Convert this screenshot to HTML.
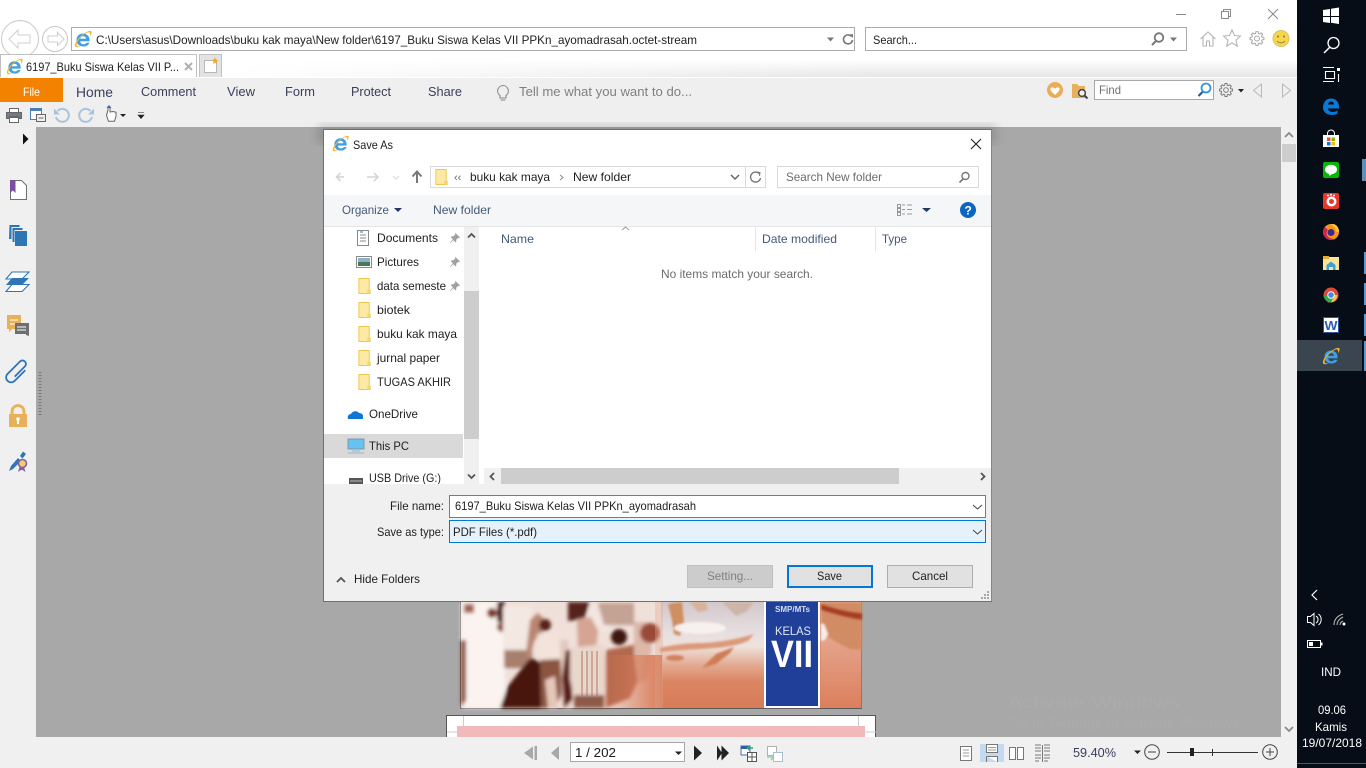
<!DOCTYPE html>
<html><head><meta charset="utf-8"><title>Save As</title>
<style>
html,body{margin:0;padding:0;width:1366px;height:768px;overflow:hidden;background:#fff}
svg{display:block;position:absolute;left:0;top:0}
text{font-family:"Liberation Sans",sans-serif;font-size:12px;fill:#222;white-space:pre}
.r{fill:#37415c;font-size:12.5px}
.d{fill:#1e1e1e}
.h{fill:#44597a}
.w{fill:#fff}
</style></head><body>
<svg width="1366" height="768" viewBox="0 0 1366 768" xmlns="http://www.w3.org/2000/svg">
<defs>
<linearGradient id="sh" x1="0" y1="0" x2="0" y2="1"><stop offset="0" stop-color="#fff"/><stop offset="1" stop-color="#e4e4e4"/></linearGradient>
<linearGradient id="shx" x1="0" y1="0" x2="1" y2="0"><stop offset="0" stop-color="#fff"/><stop offset="1" stop-color="#fff" stop-opacity="0"/></linearGradient>
<linearGradient id="fade" x1="0" y1="0" x2="0" y2="1"><stop offset="0" stop-color="#d3c8cc"/><stop offset=".3" stop-color="#e6dfe0"/><stop offset=".42" stop-color="#efe2dc"/><stop offset=".6" stop-color="#e3a88f"/><stop offset=".75" stop-color="#da8663"/><stop offset="1" stop-color="#d87b58"/></linearGradient>
<linearGradient id="pf" x1="0" y1="0" x2="1" y2="0"><stop offset="0" stop-color="#d77a58" stop-opacity="0"/><stop offset="1" stop-color="#d87b58"/></linearGradient>
<linearGradient id="rg" x1="0" y1="0" x2="0" y2="1"><stop offset="0" stop-color="#e9b8a6"/><stop offset="1" stop-color="#dc7f5c"/></linearGradient>
<filter id="b1"><feGaussianBlur stdDeviation="1"/></filter>
<filter id="b2"><feGaussianBlur stdDeviation="1.800"/></filter>
<filter id="bs"><feGaussianBlur stdDeviation="5"/></filter>
<symbol id="ie" viewBox="0 0 18 18">
<path fill-rule="evenodd" d="M2.500 10C2.500 6 5.300 3.500 9 3.500c4 0 6.500 2.800 6.500 6.500v1.200H6.200c.2 1.900 1.400 3 3.300 3 1.300 0 2.300-.5 3-1.500h3c-1 2.500-3.300 3.800-6 3.800C5.300 16.500 2.500 14 2.500 10zM6.300 8.800h5.800c-.2-1.600-1.300-2.600-2.900-2.600-1.600 0-2.700 1-2.900 2.600z" fill="#3fa0e6"/>
<path d="M1.200 16.500C-.2 14.200 3.500 8.500 8 5c4-3.100 8-4.900 9.300-3.800 1 1-.3 3.700-1.300 5 .1-1.400.3-3-.5-3.600-1.200-.7-4 .7-6.800 2.900C5 8.700 2 13 2.700 15.500c.7 1.200 2.700 1.100 4.300.2-1.900 1.500-4.700 2.100-5.800.8z" fill="#f2b632"/>
</symbol>
<symbol id="fo" viewBox="0 0 13 17">
<path d="M.5.500h11v12.500h1v3.500H.5z" fill="#fde9a4" stroke="#edc650"/><path d="M9.500 12.500h2.500v4h-2.500z" fill="#f5d56f"/>
</symbol>
<symbol id="pin" viewBox="0 0 12 12">
<path d="M6.500 1l4.500 4.500-1 .6-1-.2-1.800 1.900.1 1.800-.8.800-2.300-2.300L1.500 11 1 10.500l2.900-3.200L1.700 5.100l.8-.8 1.800.1 1.900-1.800-.2-1z" fill="#a0a0a0"/>
</symbol>
<symbol id="gear" viewBox="-8 -8 16 16">
<path d="M-1.430-5-1.090-6.910 1.090-6.910 1.430-5 2.520-4.550 4.110-5.660 5.660-4.110 4.550-2.520 5-1.430 6.910-1.090 6.910 1.090 5 1.430 4.550 2.520 5.660 4.110 4.110 5.660 2.520 4.550 1.430 5 1.090 6.910-1.090 6.910-1.430 5-2.520 4.550-4.110 5.660-5.660 4.110-4.550 2.520-5 1.430-6.910 1.090-6.910-1.090-5-1.430-4.550-2.520-5.660-4.110-4.110-5.660-2.520-4.550zM2.500 0a2.500 2.500 0 1 0-5 0 2.500 2.500 0 1 0 5 0z" fill="none" stroke="#777" stroke-width="1"/>
</symbol>
</defs>

<!-- browser chrome -->
<rect width="1366" height="768" fill="#fff"/>
<rect x="230" y="60" width="1067" height="18" fill="url(#sh)"/>
<rect x="230" y="60" width="650" height="18" fill="url(#shx)"/>
<line x1="1176" y1="14.500" x2="1186" y2="14.500" stroke="#8a8a8a"/>
<path d="M1221.500 11.500h7v7h-7zM1223.500 11.500v-2h7v7h-2" fill="none" stroke="#8a8a8a"/>
<path d="M1268 9l10 10M1278 9l-10 10" stroke="#8a8a8a" fill="none"/>
<circle cx="20" cy="39" r="18.500" fill="#fff" stroke="#c8c8c8"/>
<path d="M9 39l9-9v5h12v8H18v5z" fill="#fff" stroke="#cfcfcf" stroke-width="1"/>
<circle cx="55" cy="39" r="12.500" fill="#fff" stroke="#c8c8c8"/>
<path d="M64 39l-6.500-6.500V36H48v6h9.500v3.500z" fill="#fff" stroke="#cfcfcf" stroke-width="1"/>
<rect x="71.500" y="27.500" width="783" height="23" fill="#fff" stroke="#ababab"/>
<use href="#ie" x="74" y="30" width="18" height="18"/>
<text x="96" y="44" textLength="601" lengthAdjust="spacingAndGlyphs">C:\Users\asus\Downloads\buku kak maya\New folder\6197_Buku Siswa Kelas VII PPKn_ayomadrasah.octet-stream</text>
<path d="M827 37.500h7l-3.500 4z" fill="#777"/>
<path d="M851.500 36.500a4.500 4.500 0 1 0 1 3.500" fill="none" stroke="#777" stroke-width="1.600"/><path d="M849.500 34.500l3.500-.5-.2 4z" fill="#777"/>
<rect x="865.500" y="27.500" width="321" height="23" fill="#fff" stroke="#ababab"/>
<text x="873" y="44" textLength="44" lengthAdjust="spacingAndGlyphs">Search...</text>
<circle cx="1159" cy="37.500" r="4.300" fill="none" stroke="#777" stroke-width="1.800"/><path d="M1156 41l-4 4" stroke="#777" stroke-width="2"/>
<path d="M1170 37.500h7l-3.500 4z" fill="#777"/>
<path d="M1200.500 39l7.500-7 7.500 7M1203 37v9h3.500v-5h3v5h3.500v-9" fill="#fff" stroke="#b5b5b5" stroke-width="1.100"/>
<path d="M1232 30l2.500 5.500 6 .6-4.500 4 1.300 6-5.300-3.200-5.300 3.200 1.300-6-4.500-4 6-.6z" fill="#fff" stroke="#b5b5b5" stroke-width="1.100"/>
<use href="#gear" x="1249" y="30.500" width="16" height="16" opacity=".65"/>
<circle cx="1281" cy="38.500" r="8" fill="#f5d64d" stroke="#d8c46a"/><circle cx="1278" cy="36.500" r="1" fill="#8a7a30"/><circle cx="1284" cy="36.500" r="1" fill="#8a7a30"/><path d="M1277 41c2 2.500 6 2.500 8 0" fill="none" stroke="#8a7a30"/>

<!-- tabs -->
<path d="M0.500 78V54.500h196V78" fill="#fff" stroke="#c0c0c0"/>
<use href="#ie" x="6" y="58" width="17" height="17"/>
<text x="26" y="71" textLength="153" lengthAdjust="spacingAndGlyphs">6197_Buku Siswa Kelas VII P...</text>
<path d="M185 63l7 7M192 63l-7 7" stroke="#b0b0b0" stroke-width="2"/>
<rect x="199.500" y="54.500" width="22" height="23" fill="#e3e3e3" stroke="#c0c0c0"/>
<path d="M204.500 60.500h12v12h-12z" fill="#fff" stroke="#b8b8b8"/>
<path d="M215 57l1 2.500 2.500.5-2 1.500.5 2.500-2-1.500-2 1.500.5-2.500-2-1.500 2.500-.5z" fill="#f0a830"/>

<!-- ribbon -->
<rect x="0" y="77" width="1297" height="1" fill="#fff"/>
<rect x="0" y="78" width="1297" height="49" fill="#efefef"/>
<rect x="0" y="78" width="63" height="24" fill="#f28200"/>
<text x="23" y="96" class="w" textLength="17" lengthAdjust="spacingAndGlyphs">File</text>
<text x="76" y="97" class="r" style="font-size:14px" textLength="37" lengthAdjust="spacingAndGlyphs">Home</text>
<text x="141" y="96" class="r" textLength="55" lengthAdjust="spacingAndGlyphs">Comment</text>
<text x="227" y="96" class="r" textLength="28" lengthAdjust="spacingAndGlyphs">View</text>
<text x="285" y="96" class="r" textLength="30" lengthAdjust="spacingAndGlyphs">Form</text>
<text x="351" y="96" class="r" textLength="40" lengthAdjust="spacingAndGlyphs">Protect</text>
<text x="428" y="96" class="r" textLength="34" lengthAdjust="spacingAndGlyphs">Share</text>
<path d="M503 85.500a5.500 5.500 0 0 0-3 10v2.500h6v-2.500a5.500 5.500 0 0 0-3-10zM500.500 100h5" fill="none" stroke="#8a8a8a" stroke-width="1.100"/>
<text x="519" y="96" style="fill:#808080;font-size:12.500px" textLength="173" lengthAdjust="spacingAndGlyphs">Tell me what you want to do...</text>

<circle cx="1055" cy="90" r="8" fill="#e9ad5a"/><path d="M1055 95l-4-4c-1.500-2 0-4 1.800-3.600.9.200 1.600.8 2.200 1.600.6-.8 1.300-1.400 2.200-1.600 1.800-.4 3.300 1.600 1.800 3.600z" fill="#fff"/>
<path d="M1072 84h5l2 2h6v12h-13z" fill="#e8b05c"/><circle cx="1082" cy="93" r="3.400" fill="#f0f0f0" stroke="#444" stroke-width="1.500"/><path d="M1084.500 95.500l3 3" stroke="#444" stroke-width="2"/>
<rect x="1094.500" y="80.500" width="119" height="19" fill="#fff" stroke="#a8a8a8"/>
<text x="1099" y="94" style="fill:#707070" textLength="22" lengthAdjust="spacingAndGlyphs">Find</text>
<circle cx="1206" cy="88" r="4.500" fill="#fff" stroke="#3a93d6" stroke-width="1.800"/><path d="M1202.500 92l-4 4" stroke="#1f5d9c" stroke-width="2.200"/>
<use href="#gear" x="1218.500" y="82.500" width="15" height="15"/>
<path d="M1238 89h6l-3 3.500z" fill="#222"/>
<path d="M1261.500 84l-8 6.500 8 6.500z" fill="none" stroke="#b8b8b8"/>
<path d="M1282.500 84l8 6.500-8 6.500z" fill="none" stroke="#b8b8b8"/>

<!-- quick access -->
<rect x="9.500" y="108.500" width="9" height="4" fill="#fff" stroke="#666"/><path d="M6.500 112.500h15v6h-3v-2h-9v2h-3z" fill="#707c8a" stroke="#666"/><rect x="9.500" y="117.500" width="9" height="5" fill="#fff" stroke="#666"/>
<rect x="30.500" y="108.500" width="11" height="11" fill="#fff" stroke="#4a7fb5"/><rect x="30" y="108" width="12" height="3" fill="#4a7fb5"/><rect x="36.500" y="114.500" width="9" height="7" fill="#f0f0f0" stroke="#666"/><path d="M38.500 118h5" stroke="#666"/>
<path d="M56 117a6.500 6.500 0 1 0 1.500-6" fill="none" stroke="#aac3dd" stroke-width="2"/><path d="M54 108.500v6h6z" fill="#aac3dd"/>
<path d="M92 117a6.500 6.500 0 1 1-1.500-6" fill="none" stroke="#aac3dd" stroke-width="2"/><path d="M94 108.500v6h-6z" fill="#aac3dd"/>
<path d="M108 110v-3l1-1 1 1v5l3-.5 3 .8v4l-1.500 5h-6l-2-6z" fill="#fff" stroke="#666"/><path d="M109 105l-2.500 3h5z" fill="#2f70b0"/><path d="M120 114h6l-3 3z" fill="#222"/>
<path d="M138 112.500h6M138 115h6l-3 3.500z" fill="#222" stroke="#222" stroke-width=".6"/>

<!-- left panel and doc area -->
<rect x="0" y="127" width="36" height="610" fill="#f0f0f0"/>
<rect x="36" y="127" width="1245" height="610" fill="#a8a8a8"/>
<text x="1008" y="708" style="fill:#ababab;font-size:17px" textLength="172" lengthAdjust="spacingAndGlyphs">Activate Windows</text>
<text x="1008" y="727" style="fill:#ababab;font-size:13.500px" textLength="236" lengthAdjust="spacingAndGlyphs">Go to Settings to activate Windows.</text>
<rect x="1281" y="127" width="16" height="610" fill="#f0f0f0"/>
<path d="M1285 137l4-4 4 4" fill="none" stroke="#8a8a8a" stroke-width="1.800"/>
<rect x="1282" y="144" width="14" height="18" fill="#cdcdcd"/>
<path d="M1285 727l4 4 4-4" fill="none" stroke="#8a8a8a" stroke-width="1.800"/>

<path d="M23 133.500l5.500 5.500-5.500 5.500z" fill="#111"/>
<path d="M10.500 180.500h11l5 5v14h-16z" fill="#fff" stroke="#707070"/><path d="M10 180h5.500v13l-2.700-2.500L10 193z" fill="#7b4f9e"/>
<path d="M9.500 225h10v2H11.500v12H9z" fill="#2e75b6"/><path d="M12.500 228h10v2h-8v12h-2z" fill="#2e75b6"/><rect x="15" y="231" width="12" height="15" fill="#2e75b6"/>
<path d="M12 272h17l-7 7H6z" fill="#fff" stroke="#2e75b6" stroke-width="1.100"/><path d="M12 278h17l-7 7H6z" fill="#2e75b6"/><path d="M12 285h17l-7 7H6z" fill="#fff" stroke="#2e75b6" stroke-width="1.100" transform="translate(0 -.500)"/>
<path d="M7 315h14v14H12l-3 3v-3H7z" fill="#e9b05a"/><path d="M10 320h8M10 324h8" stroke="#fff"/><path d="M15 323h14v13l-3-1v-1H15z" fill="#6f6f6f"/><path d="M17 327h9M17 330h9" stroke="#fff"/>
<g transform="translate(17.500 371) rotate(-45)"><path d="M-6 2.500H8.500a3.500 3.500 0 0 0 0-7H-9a5 5 0 0 0 0 10H6" transform="translate(0 -.500)" fill="none" stroke="#2e75b6" stroke-width="1.800"/></g>
<path d="M12 415v-3.500a6 6 0 0 1 12 0v3.500" fill="none" stroke="#e9b05a" stroke-width="2.800"/><rect x="9" y="414" width="18" height="13" fill="#e9b05a"/><circle cx="18" cy="419" r="1.800" fill="#fff"/><rect x="17" y="419" width="2" height="5" fill="#fff"/>
<path d="M9 471l2-5 7-8 3 3-8 8zM20 456l3-4.500 3 2.500-3.500 4.500z" fill="#2e75b6"/><circle cx="22.500" cy="463.500" r="4" fill="#f0d060" stroke="#8a5da8" stroke-width="1.600"/><path d="M19.500 467l-1.500 5 3-2 1.500 0 3 2-1.500-5" fill="#8a5da8"/>
<path d="M40 372v43" stroke="#7a7a7a" stroke-width="3" stroke-dasharray="1 2"/>

<!-- page image -->
<rect x="460.500" y="601" width="401" height="107.500" fill="#d77a58" stroke="#5a5a5a"/>
<g>
<rect x="461" y="602" width="200" height="106" fill="#f0e0da"/>
<g filter="url(#b2)">
<rect x="461" y="602" width="44" height="106" fill="#fbf3ef"/>
<path d="M461 640l5 0 0 60-5 8z" fill="#8a4a38"/>
<rect x="464" y="604" width="10" height="9" fill="#a4604e"/>
<circle cx="492" cy="613" r="5" fill="#7d3a2c"/>
<rect x="497" y="602" width="8" height="20" fill="#4c1611"/>
<circle cx="502" cy="627" r="5" fill="#84402f"/>
<rect x="504" y="650" width="28" height="18" fill="#a77f6d"/>
<path d="M500 708l8-22 22-28 12 4 2 46z" fill="#4a1510"/>
<path d="M503 606h28v44h-28z" fill="#f4e8e2"/>
<path d="M530 620l8-7 6 6-2 14-8 8-5 20-3-8z" fill="#b98672"/>
<circle cx="545" cy="625" r="6" fill="#5a2418"/>
<path d="M537 634l21-2 3 28-22 2z" fill="#f3e3da"/>
<path d="M540 660l20-1 3 32-8 17h-14z" fill="#8c5442"/>
<path d="M545 680l10-4 3 32h-10z" fill="#e5c7b8"/>
<path d="M560 640l8 0 4 68-10 0z" fill="#e2c8bd"/>
<path d="M566 650l6 0 0 50-8 8-2-30z" fill="#5c1f17"/>
<path d="M568 602h22l-6 17-16 2z" fill="#57201a"/>
<path d="M590 602l22 26 -8 4-16-16z" fill="#f2e6e0"/>
<path d="M577 619l14-2 7 14-2 18h-18z" fill="#d5a493"/>
<path d="M570 648l34-4 1 44-3 10-28 1-4-20z" fill="#ead7cc"/>
<path d="M574 695h30v13h-30z" fill="#8d5a46"/>
<path d="M598 603h36v22h-30z" fill="#c4a294"/>
<circle cx="619" cy="637" r="8" fill="#3e1510"/>
<path d="M606 650l32-6 4 28-12 26-24 10z" fill="#b4684e"/>
<path d="M634 622h12l6 26-4 30-10 6-4-30z" fill="#ddb8a8"/>
<circle cx="650" cy="633" r="10" fill="#9a4a38"/>
</g>
<path d="M582 651v45M587 651v45M592 651v45M597 651v45" stroke="#b07a66"/>
<rect x="661" y="602" width="103" height="106" fill="url(#fade)"/>
<rect x="600" y="655" width="62" height="53" fill="url(#pf)"/>
<path d="M655 602h8v106h-8z" fill="#e0a58e" opacity=".35"/>
<g filter="url(#b1)">
<path d="M668 604l14-2 2 20-4 14-6-2-2-14z" fill="#cf8f5e"/>
<path d="M722 602h32l-8 10-10 4-6-6z" fill="#cdb6a8"/>
<path d="M690 602l16 0 2 8-10 2z" fill="#d7b29a"/>
<ellipse cx="700" cy="628" rx="26" ry="6" fill="#f6f0ee"/>
<path d="M660 648c10-3 28-5 40-5s35-3 54-9l-6 7c-14 6-30 7-46 8s-30 2-42 3z" fill="#dc9a7c"/>
<path d="M702 668l14-14 18-7-4 6-14 11z" fill="#cf7c56"/>
<ellipse cx="675" cy="658" rx="9" ry="3" fill="#d2825f"/>
</g>
<rect x="764" y="601" width="56" height="107" fill="#fff"/>
<rect x="766" y="602" width="52" height="104" fill="#1f3f98"/>
<rect x="820.500" y="602" width="41" height="106" fill="url(#rg)"/>
<g filter="url(#b1)">
<path d="M821 602h41v48l-12-1-12-6-10-6-7-2z" fill="#d18c64"/>
<path d="M821 604c13 4 26 8 41 9v7c-15-2-28-6-41-10z" fill="#a93e20"/>
<path d="M821 624h3l4 10-3 6-4 1z" fill="#f6efec"/>
</g>
<text x="775" y="612" style="font-size:8px;font-weight:bold;fill:#cfe0f2" textLength="35" lengthAdjust="spacingAndGlyphs">SMP/MTs</text>
<text x="775" y="635" style="font-size:12px;fill:#dfe8f5" textLength="36" lengthAdjust="spacingAndGlyphs">KELAS</text>
<text x="771" y="667" style="font-size:38px;font-weight:bold;fill:#fff" textLength="42" lengthAdjust="spacingAndGlyphs">VII</text>
</g>
<rect x="446.500" y="715.500" width="429" height="30" fill="#fff" stroke="#555"/>
<path d="M463.500 716v11M858.500 716v11M447 732h14M862 732h14" stroke="#ccc"/>
<rect x="457" y="726" width="408" height="12" fill="#f1b9b9"/>

<!-- bottom bar -->
<rect x="0" y="737" width="1297" height="31" fill="#f0f0f0"/>
<path d="M533 746.500l-9 6.500 9 6.500z" fill="#a8a8a8"/><rect x="534.500" y="746" width="2.500" height="14" fill="#a8a8a8"/>
<path d="M559 746l-8 7 8 7z" fill="#a8a8a8"/>
<rect x="570.500" y="742.500" width="114" height="19" fill="#fff" stroke="#a8a8a8"/>
<text x="575" y="757" style="fill:#1a1a1a;font-size:13px" textLength="41" lengthAdjust="spacingAndGlyphs">1 / 202</text>
<path d="M675 751.500h7l-3.500 3.500z" fill="#222"/>
<path d="M694 745.500l8 7.500-8 7.500z" fill="#222"/>
<path d="M717 745.500l5 7.500-5 7.500zM721.500 745.500l7.500 7.500-7.500 7.500z" fill="#222"/>
<rect x="741" y="746" width="9" height="9" fill="#fff" stroke="#4a6fa5"/><rect x="741" y="746" width="9" height="3" fill="#2f5f9f"/><rect x="747.500" y="752.500" width="9" height="9" fill="#fff" stroke="#555"/><path d="M747 757h10M752 752v10" stroke="#555"/><path d="M748 748h5M750 745.500l-2.500 2.500 2.500 2.500" fill="none" stroke="#3aa07e" stroke-width="1.500"/>
<rect x="767.500" y="746.500" width="9" height="9" fill="#fff" stroke="#b0b0b0"/><rect x="773.500" y="752.500" width="9" height="9" fill="#fff" stroke="#a8bcd0"/><path d="M767 757h6M771 755l2.500 2.500-2.500 2.500" fill="none" stroke="#98cbb8" stroke-width="1.500"/>

<rect x="960.500" y="746.500" width="11" height="14" fill="#fff" stroke="#777"/><path d="M963 750h6M963 753h6M963 756h6" stroke="#999"/>
<rect x="980" y="744" width="24" height="18" fill="#c5d9f1"/>
<path d="M986.500 744.500h11v8h-11zM986.500 756.500h11v5.500M986.500 762v-5.500" fill="#fff" stroke="#777"/><path d="M988 747.500h8M988 750h8" stroke="#999"/>
<rect x="1009.500" y="747.500" width="6" height="12" fill="#fff" stroke="#777"/><rect x="1017.500" y="747.500" width="6" height="12" fill="#fff" stroke="#777"/>
<path d="M1035 745h6M1035 748h6M1035 751h6M1044 745h6M1044 748h6M1044 751h6M1035 755h6M1035 758h6M1035 761h4M1044 755h6M1044 758h6M1044 761h4M1042.500 745v17" stroke="#777" fill="none"/>
<text x="1073" y="757" class="r" style="font-size:13px" textLength="43" lengthAdjust="spacingAndGlyphs">59.40%</text>
<path d="M1134 750.500h7l-3.500 3.500z" fill="#222"/>
<circle cx="1152" cy="752" r="7.300" fill="none" stroke="#444"/><path d="M1148 752h8" stroke="#444"/>
<path d="M1167 752.500h91" stroke="#333"/><rect x="1190" y="748" width="4" height="8" fill="#222"/><path d="M1212.500 749v7" stroke="#333"/>
<circle cx="1270" cy="752" r="7.300" fill="none" stroke="#444"/><path d="M1266 752h8M1270 748v8" stroke="#444"/>

<!-- dialog shadow limited to the ribbon/top area -->
<rect x="318" y="124" width="678" height="20" fill="#000" opacity=".14" filter="url(#bs)"/>
<rect x="323.500" y="129.500" width="668" height="472" fill="#fff" stroke="#2a82c4"/>
<rect x="324" y="130" width="667" height="471" fill="#fff"/>
<use href="#ie" x="332" y="135" width="17" height="17"/>
<text x="353" y="149" class="d" textLength="40" lengthAdjust="spacingAndGlyphs">Save As</text>
<path d="M971 139l10 10M981 139l-10 10" stroke="#222" stroke-width="1.100"/>
<path d="M344 177h-7M340.500 173l-4 4 4 4" fill="none" stroke="#d4d4d4" stroke-width="1.600"/>
<path d="M367 177h11M374 173l4 4-4 4" fill="none" stroke="#d4d4d4" stroke-width="1.600"/>
<path d="M393 176l3 3 3-3" fill="none" stroke="#d8d8d8"/>
<path d="M417 183v-11M412.500 176.500l4.500-5 4.500 5" fill="none" stroke="#777" stroke-width="2"/>
<rect x="430.500" y="166.500" width="335" height="21" fill="#fff" stroke="#d9d9d9"/>
<path d="M745.500 167v20" stroke="#d9d9d9"/>
<use href="#fo" x="435" y="169" width="13" height="16"/>
<text x="454" y="181" style="fill:#666;font-size:11px">‹‹</text>
<text x="470" y="181" class="d" textLength="80" lengthAdjust="spacingAndGlyphs">buku kak maya</text>
<path d="M560 175l3 2.500-3 2.500" fill="none" stroke="#888"/>
<text x="573" y="181" class="d" textLength="58" lengthAdjust="spacingAndGlyphs">New folder</text>
<path d="M731 175l4 4 4-4" fill="none" stroke="#666" stroke-width="1.500"/>
<path d="M759.500 174a5 5 0 1 0 1 4" fill="none" stroke="#777" stroke-width="1.400"/><path d="M757 172l3 .5-.5 3.500" fill="none" stroke="#777"/>
<rect x="777.500" y="166.500" width="201" height="21" fill="#fff" stroke="#d9d9d9"/>
<text x="786" y="181" style="fill:#6d6d6d" textLength="96" lengthAdjust="spacingAndGlyphs">Search New folder</text>
<circle cx="965.500" cy="176" r="3.500" fill="none" stroke="#777" stroke-width="1.400"/><path d="M963 179l-3.500 3.500" stroke="#777" stroke-width="1.600"/>
<rect x="324" y="195" width="667" height="31" fill="#f5f6f7"/>
<rect x="324" y="226" width="667" height="1" fill="#e5e5e5"/>
<text x="342" y="214" class="h" textLength="47" lengthAdjust="spacingAndGlyphs">Organize</text>
<path d="M394 208h8l-4 4z" fill="#1f3864"/>
<text x="433" y="214" class="h" textLength="58" lengthAdjust="spacingAndGlyphs">New folder</text>
<path d="M897.500 204.500h3v3h-3zM897.500 208.500h3v3h-3zM897.500 212.500h3v3h-3z" fill="none" stroke="#999"/><path d="M902 205h3M907 205h5M902 209.500h3M907 209.500h5M902 214h3M907 214h5" stroke="#999"/>
<path d="M922 208h9l-4.500 4z" fill="#1f3864"/>
<circle cx="968" cy="210" r="8" fill="#0a66c0"/><text x="964.500" y="214.500" style="font-size:12px;font-weight:bold;fill:#fff">?</text>

<!-- nav pane -->
<rect x="324" y="434" width="139" height="24" fill="#d9d9d9"/>
<path d="M358.500 230.500h10v15h-11v-15zM360 235h6M360 238h6M360 241h6" fill="#fff" stroke="#888"/><path d="M360 232h3" stroke="#2e75b6"/>
<text x="377" y="242" class="d" textLength="61" lengthAdjust="spacingAndGlyphs">Documents</text>
<use href="#pin" x="449" y="232" width="12" height="12"/>
<rect x="356.500" y="256.500" width="15" height="11" fill="#fff" stroke="#888"/><rect x="358" y="258" width="12" height="8" fill="#8fb2c8"/><rect x="358" y="262" width="12" height="4" fill="#4a7a5a"/>
<text x="377" y="266" class="d" textLength="42" lengthAdjust="spacingAndGlyphs">Pictures</text>
<use href="#pin" x="449" y="256" width="12" height="12"/>
<use href="#fo" x="358" y="278" width="13" height="16"/>
<text x="377" y="290" class="d" textLength="69" lengthAdjust="spacingAndGlyphs">data semeste</text>
<use href="#pin" x="449" y="280" width="12" height="12"/>
<use href="#fo" x="358" y="302" width="13" height="16"/>
<text x="377" y="314" class="d" textLength="33" lengthAdjust="spacingAndGlyphs">biotek</text>
<use href="#fo" x="358" y="326" width="13" height="16"/>
<text x="377" y="338" class="d" textLength="80" lengthAdjust="spacingAndGlyphs">buku kak maya</text>
<use href="#fo" x="358" y="350" width="13" height="16"/>
<text x="377" y="362" class="d" textLength="63" lengthAdjust="spacingAndGlyphs">jurnal paper</text>
<use href="#fo" x="358" y="374" width="13" height="16"/>
<text x="377" y="386" class="d" textLength="74" lengthAdjust="spacingAndGlyphs">TUGAS AKHIR</text>
<path d="M348 419c-1-3 1-5 3-5 1-3 6-4 8-1 2 0 4 1 4 3v3z" fill="#0f78d4"/>
<text x="369" y="418" class="d" textLength="49" lengthAdjust="spacingAndGlyphs">OneDrive</text>
<rect x="348" y="439" width="16" height="10" fill="#66c2f0" stroke="#7a9ab0"/><path d="M352 451h8M348 453h16" stroke="#9ab4c8"/>
<text x="369" y="450" class="d" textLength="40" lengthAdjust="spacingAndGlyphs">This PC</text>
<rect x="349" y="478" width="14" height="7" fill="#555"/><rect x="350" y="480" width="12" height="2" fill="#888"/>
<text x="369" y="482" class="d" textLength="72" lengthAdjust="spacingAndGlyphs">USB Drive (G:)</text>
<rect x="464" y="227" width="15" height="258" fill="#f0f0f0"/>
<rect x="464" y="291" width="15" height="148" fill="#cdcdcd"/>
<path d="M468 237.500l3.500-3.500 3.500 3.500" fill="none" stroke="#555" stroke-width="1.800"/>
<path d="M468 474.500l3.500 3.500 3.500-3.500" fill="none" stroke="#555" stroke-width="1.800"/>

<!-- list -->
<path d="M622 230l3.500-3 3.500 3" fill="none" stroke="#999"/>
<text x="501" y="243" class="h" textLength="33" lengthAdjust="spacingAndGlyphs">Name</text>
<path d="M755.500 227v24M875.500 227v24" stroke="#e5e5e5"/>
<text x="762" y="243" class="h" textLength="75" lengthAdjust="spacingAndGlyphs">Date modified</text>
<text x="882" y="243" class="h" textLength="25" lengthAdjust="spacingAndGlyphs">Type</text>
<text x="661" y="278" style="fill:#6d6d6d" textLength="152" lengthAdjust="spacingAndGlyphs">No items match your search.</text>
<rect x="484" y="468" width="507" height="17" fill="#f0f0f0"/>
<rect x="501" y="468" width="398" height="17" fill="#cdcdcd"/>
<path d="M494 473l-3.500 3.500 3.500 3.500" fill="none" stroke="#555" stroke-width="1.800"/>
<path d="M981 473l3.500 3.500-3.500 3.500" fill="none" stroke="#555" stroke-width="1.800"/>

<!-- bottom panel -->
<rect x="324" y="484" width="667" height="117" fill="#f0f0f0"/>
<text x="390" y="510" class="d" textLength="54" lengthAdjust="spacingAndGlyphs">File name:</text>
<rect x="449.500" y="495.500" width="536" height="22" fill="#fff" stroke="#7a7a7a"/>
<text x="455" y="510" class="d" textLength="241" lengthAdjust="spacingAndGlyphs">6197_Buku Siswa Kelas VII PPKn_ayomadrasah</text>
<path d="M973 505l4.500 4 4.500-4" fill="none" stroke="#444"/>
<text x="377" y="536" class="d" textLength="67" lengthAdjust="spacingAndGlyphs">Save as type:</text>
<rect x="449.500" y="520.500" width="536" height="22" fill="#e5f1fb" stroke="#0078d7"/>
<text x="453" y="536" class="d" textLength="84" lengthAdjust="spacingAndGlyphs">PDF Files (*.pdf)</text>
<path d="M973 530l4.500 4 4.500-4" fill="none" stroke="#444"/>
<path d="M337 582l4-4 4 4" fill="none" stroke="#555" stroke-width="1.800"/>
<text x="354" y="583" class="d" textLength="66" lengthAdjust="spacingAndGlyphs">Hide Folders</text>
<rect x="687.500" y="565.500" width="85" height="22" fill="#cccccc" stroke="#bfbfbf"/>
<text x="707" y="580" style="fill:#808080" textLength="46" lengthAdjust="spacingAndGlyphs">Setting...</text>
<rect x="788" y="566" width="84" height="21" fill="#e1e1e1" stroke="#0078d7" stroke-width="2"/>
<text x="817" y="580" class="d" textLength="25" lengthAdjust="spacingAndGlyphs">Save</text>
<rect x="887.500" y="565.500" width="85" height="22" fill="#e1e1e1" stroke="#adadad"/>
<text x="912" y="580" class="d" textLength="36" lengthAdjust="spacingAndGlyphs">Cancel</text>
<path d="M987 591h2v2h-2zM984 594h2v2h-2zM987 594h2v2h-2zM981 597h2v2h-2zM984 597h2v2h-2zM987 597h2v2h-2z" fill="#a8a8a8"/>
<rect x="991" y="130" width="1" height="472" fill="#5b8fc0"/>
<rect x="323" y="601" width="669" height="1" fill="#2a82c4"/>

<!-- taskbar -->
<rect x="1297" y="0" width="69" height="768" fill="#060d16"/>
<path d="M1323 10l7-1v7h-7zM1331 8.800l8-1.300v8.500h-8zM1323 17h7v6l-7-1zM1331 17h8v7l-8-1.200z" fill="#fff"/>
<circle cx="1333.500" cy="43" r="5.500" fill="none" stroke="#fff" stroke-width="1.300"/><path d="M1329.500 47.500l-5.500 5.500" stroke="#fff" stroke-width="1.500"/>
<path d="M1323 67.500h11M1323 81.500h11M1325.500 71.500h9v7h-9zM1338.500 74v8" fill="none" stroke="#fff" stroke-width="1.100"/><rect x="1337" y="68" width="3" height="3" fill="#fff"/>
<path fill-rule="evenodd" d="M1323 108c0-6 3.500-9.500 8-9.500 5 0 8 3.500 8 8.500v1.500h-11c.3 2.300 2 3.500 4.500 3.500 2 0 3.600-.5 5-1.500v3c-1.500 1-3.500 1.500-5.500 1.500-5 0-9-3-9-7.500zM1328 104.500h6c-.2-2-1.300-3-3-3-1.500 0-2.700 1-3 3z" fill="#0a78d7"/>
<rect x="1323" y="135" width="16" height="12" fill="#fff"/><path d="M1327.500 135v-1.500a3.500 3.500 0 0 1 7 0v1.500" fill="none" stroke="#fff"/><rect x="1327" y="137.500" width="3.500" height="3.500" fill="#e3502a"/><rect x="1331.500" y="137.500" width="3.500" height="3.500" fill="#7fba00"/><rect x="1327" y="142" width="3.500" height="3.500" fill="#0a78d7"/><rect x="1331.500" y="142" width="3.500" height="3.500" fill="#ffb900"/>
<rect x="1323" y="162" width="16" height="16" rx="2" fill="#06b806"/><ellipse cx="1331" cy="169.500" rx="6" ry="4.800" fill="#fff"/><path d="M1329 173l.5 3 3-2.500z" fill="#fff"/>
<rect x="1323" y="193" width="16" height="16" rx="2" fill="#e8382c"/><circle cx="1331.500" cy="201.500" r="5" fill="#fff"/><circle cx="1331.500" cy="201.500" r="2.500" fill="#e8382c"/><circle cx="1328" cy="195.500" r="1" fill="#fff"/><circle cx="1331" cy="194.800" r="1" fill="#fff"/><circle cx="1334" cy="195.500" r="1" fill="#fff"/>
<circle cx="1331" cy="232" r="8" fill="#f7941d"/><path d="M1323 232a8 8 0 0 0 12 7c-3 0-7-1-8-4-1-2 0-4 1-5l-3-3a8 8 0 0 0-2 5z" fill="#c8265a"/><circle cx="1331" cy="232.500" r="3.500" fill="#3a2a8c"/><path d="M1330 224.500c4 1 6 4 6 7l3 .5a8 8 0 0 0-5-8z" fill="#ffc840"/>
<rect x="1323" y="257" width="16" height="13" fill="#fbe39a"/><rect x="1323" y="256" width="6" height="3" fill="#e8ac30"/><path d="M1326.500 270v-5l4.500-3.500 4.500 3.500v5h-2.500v-3h-4v3z" fill="#3aa0d8"/>
<circle cx="1331" cy="295" r="7.500" fill="#de4a3a"/><path d="M1331 295l6.500 0a7.500 7.500 0 0 1-10 7z" fill="#f6c63c"/><path d="M1323.800 295a7.500 7.500 0 0 0 7 7.500l3.500-6z" fill="#2da94f"/><circle cx="1331" cy="295" r="3.300" fill="#4a86e8" stroke="#fff"/>
<rect x="1323.500" y="317.500" width="15" height="15" fill="#fff" stroke="#2b579a"/><text x="1324.500" y="330" style="font-size:13px;font-weight:bold;fill:#2b5fb0" textLength="13" lengthAdjust="spacingAndGlyphs">W</text>
<rect x="1297" y="340" width="65" height="31" fill="#3a4550"/>
<use href="#ie" x="1322" y="347" width="18" height="18"/>
<rect x="1362" y="159" width="4" height="22" fill="#5f8fb8"/>
<rect x="1364" y="252" width="2" height="22" fill="#5b9bd5"/>
<rect x="1364" y="283" width="2" height="22" fill="#5b9bd5"/>
<rect x="1364" y="314" width="2" height="22" fill="#5b9bd5"/>
<rect x="1364" y="341" width="2" height="30" fill="#5b9bd5"/>
<path d="M1317 590l-5 5 5 5" fill="none" stroke="#fff" stroke-width="1.200"/>
<path d="M1307.500 616.500h3l3.500-3v12l-3.500-3h-3z" fill="none" stroke="#fff"/><path d="M1316 616a4 4 0 0 1 0 7M1318.500 614a7 7 0 0 1 0 11" fill="none" stroke="#fff"/>
<path d="M1334 625c0-5 3-9 9-11M1337 625c0-3 2-6 6-8M1340 625c0-1.500 1-3 3-4" fill="none" stroke="#bbb"/><circle cx="1344" cy="624" r="1.500" fill="#fff"/>
<rect x="1307.500" y="640.500" width="13" height="7" fill="none" stroke="#fff"/><rect x="1309" y="642" width="4" height="4" fill="#fff"/><rect x="1321" y="642.500" width="1.500" height="3" fill="#fff"/>
<text x="1321" y="676" class="w" textLength="20" lengthAdjust="spacingAndGlyphs">IND</text>
<text x="1318" y="714" class="w" textLength="28" lengthAdjust="spacingAndGlyphs">09.06</text>
<text x="1315" y="731" class="w" textLength="32" lengthAdjust="spacingAndGlyphs">Kamis</text>
<text x="1302" y="747" class="w" textLength="60" lengthAdjust="spacingAndGlyphs">19/07/2018</text>
<rect x="1297" y="763" width="69" height="1" fill="#555"/>
</svg>
</body></html>
